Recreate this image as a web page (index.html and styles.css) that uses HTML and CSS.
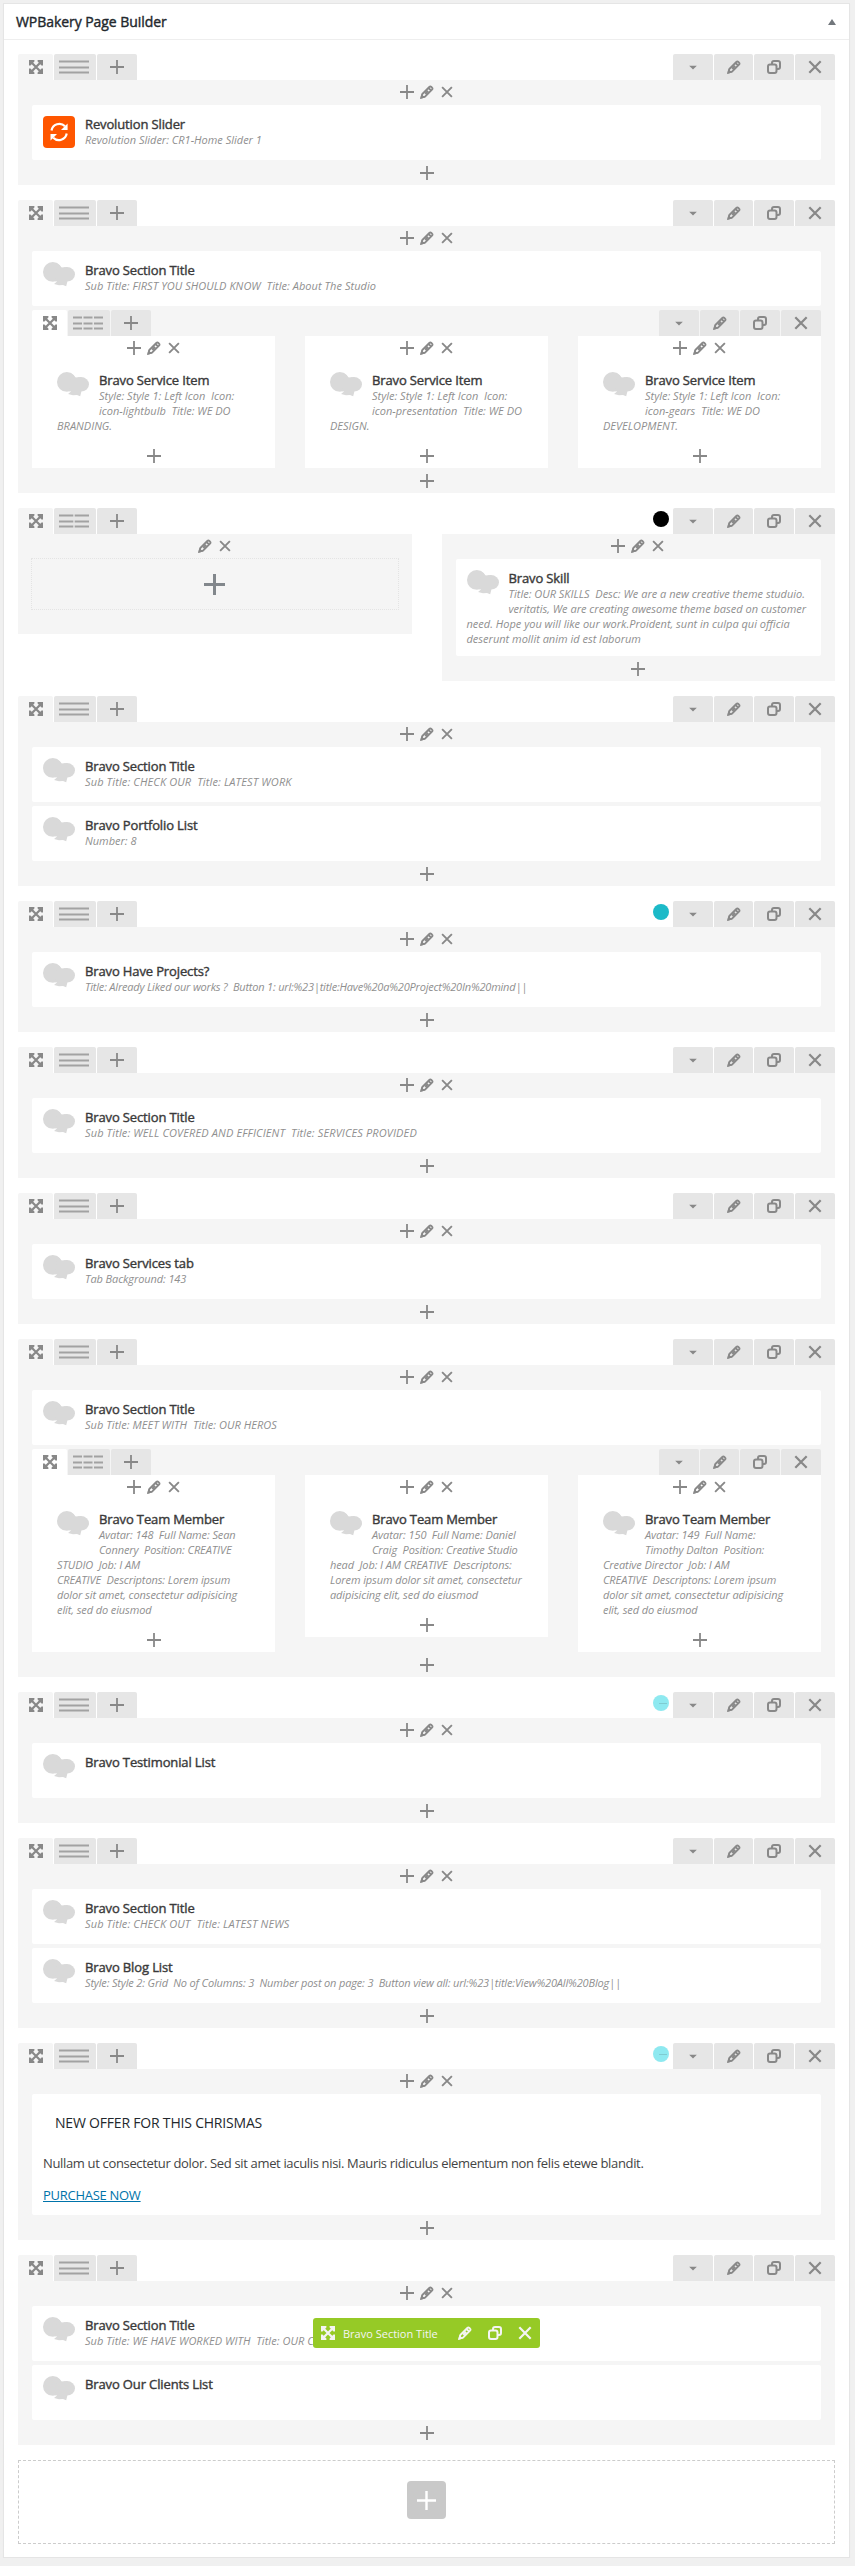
FILE: index.html
```html
<!DOCTYPE html>
<html lang="en">
<head>
<meta charset="utf-8">
<title>WPBakery Page Builder</title>
<link rel="stylesheet" href="styles.css">
</head>
<body>
<svg class="sprite" aria-hidden="true">
  <symbol id="move" viewBox="0 0 14 14"><path d="M3 3l8 8M11 3l-8 8" stroke="currentColor" stroke-width="2.200" fill="none"/><path d="M0 0h5.400v1.500L1.500 5.400H0zM14 0v5.400h-1.500L8.600 1.500V0zM0 14V8.600h1.500l3.900 3.900V14zM14 14H8.600v-1.500l3.900-3.900H14z" fill="currentColor"/></symbol>
  <symbol id="plus" viewBox="0 0 14 14"><path d="M6.100 0h1.800v6.100H14v1.800H7.900V14H6.100V7.900H0V6.100h6.100z" fill="currentColor"/></symbol>
  <symbol id="pencil" viewBox="0 0 14 14"><path d="M1.500 12.500l.8-3.500 7-7a1.500 1.500 0 0 1 2.100 0l.6.600a1.500 1.500 0 0 1 0 2.100l-7 7zM8.500 3l2.500 2.500M5.200 8.800l2.900-2.900" fill="none" stroke="currentColor" stroke-width="1.800"/><path d="M0 14l1.400-5 3.600 3.600z" fill="currentColor"/></symbol>
  <symbol id="close" viewBox="0 0 14 14"><path d="M1.300 1.300l11.400 11.400M12.700 1.300L1.300 12.700" stroke="currentColor" stroke-width="2.200" fill="none"/></symbol>
  <symbol id="copy" viewBox="0 0 14 14"><rect x="1" y="4.500" width="8.500" height="8.500" rx="2" fill="none" stroke="currentColor" stroke-width="2"/><path d="M5 4.500V3a2 2 0 0 1 2-2h4a2 2 0 0 1 2 2v4a2 2 0 0 1-2 2H9.500" fill="none" stroke="currentColor" stroke-width="2"/></symbol>
  <symbol id="caret" viewBox="0 0 14 14"><path d="M3.200 5.800h7.600L7 9.600z" fill="currentColor"/></symbol>
  <symbol id="lay1" viewBox="0 0 30 14"><path d="M0 1.500h30M0 7.500h30M0 12.500h30" stroke="currentColor" stroke-width="2"/></symbol>
  <symbol id="lay2" viewBox="0 0 30 14"><path d="M0 1.500h30M0 7.500h30M0 12.500h30" stroke="currentColor" stroke-width="2" stroke-dasharray="14.300 1.400"/></symbol>
  <symbol id="lay3" viewBox="0 0 30 14"><path d="M0 1.500h30M0 7.500h30M0 12.500h30" stroke="currentColor" stroke-width="2" stroke-dasharray="9 1.500"/></symbol>
  <symbol id="cloud" viewBox="0 0 32 32"><g fill="#d9d9d9"><ellipse cx="9.800" cy="9.900" rx="9.800" ry="9.900"/><ellipse cx="24" cy="12.300" rx="8" ry="7.300"/><path d="M14 1.300L18.500 5.500 24 5V19.500L12 19.200z"/><path d="M12 17H25L23.200 24.200 20 23 16 23.300 11 22 14 19.500z"/></g></symbol>
  <symbol id="revo" viewBox="0 0 32 32"><rect width="32" height="32" rx="4" fill="#ff5600"/><path d="M8.500 14.500A8 8 0 0 1 22 10.200M23.700 17.500A8 8 0 0 1 10.200 21.800" fill="none" stroke="#fff" stroke-width="2.200"/><path d="M24.600 7.500V14H18zM7.500 24.500V18H14z" fill="#fff"/></symbol>
</svg>

<main class="panel">
  <header class="panel-head"><h2>WPBakery Page Builder</h2><span class="toggle"></span></header>
  <div class="rows">

    <section class="row">
      <div class="bar"><b class="tab grip"><svg><use href="#move"/></svg></b><b class="tab lay"><svg><use href="#lay1"/></svg></b><b class="tab"><svg><use href="#plus"/></svg></b><i class="fill"></i><b class="tab"><svg><use href="#caret"/></svg></b><b class="tab edit"><svg><use href="#pencil"/></svg></b><b class="tab"><svg><use href="#copy"/></svg></b><b class="tab"><svg><use href="#close"/></svg></b></div>
      <div class="col">
        <div class="ctl"><svg><use href="#plus"/></svg><svg><use href="#pencil"/></svg><svg class="x"><use href="#close"/></svg></div>
        <div class="card"><svg class="ico"><use href="#revo"/></svg><h4>Revolution Slider</h4><p>Revolution Slider: CR1-Home Slider 1</p></div>
        <div class="ctl end"><svg><use href="#plus"/></svg></div>
      </div>
    </section>

    <section class="row">
      <div class="bar"><b class="tab grip"><svg><use href="#move"/></svg></b><b class="tab lay"><svg><use href="#lay1"/></svg></b><b class="tab"><svg><use href="#plus"/></svg></b><i class="fill"></i><b class="tab"><svg><use href="#caret"/></svg></b><b class="tab edit"><svg><use href="#pencil"/></svg></b><b class="tab"><svg><use href="#copy"/></svg></b><b class="tab"><svg><use href="#close"/></svg></b></div>
      <div class="col">
        <div class="ctl"><svg><use href="#plus"/></svg><svg><use href="#pencil"/></svg><svg class="x"><use href="#close"/></svg></div>
        <div class="card"><svg class="ico"><use href="#cloud"/></svg><h4>Bravo Section Title</h4><p class="wide">Sub Title: FIRST YOU SHOULD KNOW&nbsp; Title: About The Studio</p></div>
        <div class="inner">
          <div class="bar"><b class="tab grip"><svg><use href="#move"/></svg></b><b class="tab lay"><svg><use href="#lay3"/></svg></b><b class="tab"><svg><use href="#plus"/></svg></b><i class="fill"></i><b class="tab"><svg><use href="#caret"/></svg></b><b class="tab edit"><svg><use href="#pencil"/></svg></b><b class="tab"><svg><use href="#copy"/></svg></b><b class="tab"><svg><use href="#close"/></svg></b></div>
          <div class="cols">
            <div class="col">
              <div class="ctl"><svg><use href="#plus"/></svg><svg><use href="#pencil"/></svg><svg class="x"><use href="#close"/></svg></div>
              <div class="card"><svg class="ico"><use href="#cloud"/></svg><h4>Bravo Service Item</h4><p>Style: Style 1: Left Icon&nbsp; Icon:<br>icon-lightbulb&nbsp; Title: WE DO<br>BRANDING.</p></div>
              <div class="ctl end"><svg><use href="#plus"/></svg></div>
            </div>
            <div class="col">
              <div class="ctl"><svg><use href="#plus"/></svg><svg><use href="#pencil"/></svg><svg class="x"><use href="#close"/></svg></div>
              <div class="card"><svg class="ico"><use href="#cloud"/></svg><h4>Bravo Service Item</h4><p>Style: Style 1: Left Icon&nbsp; Icon:<br>icon-presentation&nbsp; Title: WE DO<br>DESIGN.</p></div>
              <div class="ctl end"><svg><use href="#plus"/></svg></div>
            </div>
            <div class="col">
              <div class="ctl"><svg><use href="#plus"/></svg><svg><use href="#pencil"/></svg><svg class="x"><use href="#close"/></svg></div>
              <div class="card"><svg class="ico"><use href="#cloud"/></svg><h4>Bravo Service Item</h4><p>Style: Style 1: Left Icon&nbsp; Icon:<br>icon-gears&nbsp; Title: WE DO<br>DEVELOPMENT.</p></div>
              <div class="ctl end"><svg><use href="#plus"/></svg></div>
            </div>
          </div>
        </div>
        <div class="ctl end"><svg><use href="#plus"/></svg></div>
      </div>
    </section>

    <section class="row">
      <div class="bar"><b class="tab grip"><svg><use href="#move"/></svg></b><b class="tab lay"><svg><use href="#lay2"/></svg></b><b class="tab"><svg><use href="#plus"/></svg></b><i class="fill"></i><i class="dot black"></i><b class="tab"><svg><use href="#caret"/></svg></b><b class="tab edit"><svg><use href="#pencil"/></svg></b><b class="tab"><svg><use href="#copy"/></svg></b><b class="tab"><svg><use href="#close"/></svg></b></div>
      <div class="cols">
        <div class="col empty">
          <div class="ctl"><svg><use href="#pencil"/></svg><svg class="x"><use href="#close"/></svg></div>
          <div class="blank"><i class="bigplus"></i></div>
        </div>
        <div class="col">
          <div class="ctl"><svg><use href="#plus"/></svg><svg><use href="#pencil"/></svg><svg class="x"><use href="#close"/></svg></div>
          <div class="card"><svg class="ico"><use href="#cloud"/></svg><h4>Bravo Skill</h4><p>Title: OUR SKILLS&nbsp; Desc: We are a new creative theme studuio.<br>veritatis, We are creating awesome theme based on customer<br>need. Hope you will like our work.Proident, sunt in culpa qui officia<br>deserunt mollit anim id est laborum</p></div>
          <div class="ctl end"><svg><use href="#plus"/></svg></div>
        </div>
      </div>
    </section>

    <section class="row">
      <div class="bar"><b class="tab grip"><svg><use href="#move"/></svg></b><b class="tab lay"><svg><use href="#lay1"/></svg></b><b class="tab"><svg><use href="#plus"/></svg></b><i class="fill"></i><b class="tab"><svg><use href="#caret"/></svg></b><b class="tab edit"><svg><use href="#pencil"/></svg></b><b class="tab"><svg><use href="#copy"/></svg></b><b class="tab"><svg><use href="#close"/></svg></b></div>
      <div class="col">
        <div class="ctl"><svg><use href="#plus"/></svg><svg><use href="#pencil"/></svg><svg class="x"><use href="#close"/></svg></div>
        <div class="card"><svg class="ico"><use href="#cloud"/></svg><h4>Bravo Section Title</h4><p class="caps">Sub Title: CHECK OUR&nbsp; Title: LATEST WORK</p></div>
        <div class="card"><svg class="ico"><use href="#cloud"/></svg><h4>Bravo Portfolio List</h4><p>Number: 8</p></div>
        <div class="ctl end"><svg><use href="#plus"/></svg></div>
      </div>
    </section>

    <section class="row">
      <div class="bar"><b class="tab grip"><svg><use href="#move"/></svg></b><b class="tab lay"><svg><use href="#lay1"/></svg></b><b class="tab"><svg><use href="#plus"/></svg></b><i class="fill"></i><i class="dot teal"></i><b class="tab"><svg><use href="#caret"/></svg></b><b class="tab edit"><svg><use href="#pencil"/></svg></b><b class="tab"><svg><use href="#copy"/></svg></b><b class="tab"><svg><use href="#close"/></svg></b></div>
      <div class="col">
        <div class="ctl"><svg><use href="#plus"/></svg><svg><use href="#pencil"/></svg><svg class="x"><use href="#close"/></svg></div>
        <div class="card"><svg class="ico"><use href="#cloud"/></svg><h4>Bravo Have Projects?</h4><p class="url">Title: Already Liked our works ?&nbsp; Button 1: url:%23|title:Have%20a%20Project%20In%20mind||</p></div>
        <div class="ctl end"><svg><use href="#plus"/></svg></div>
      </div>
    </section>

    <section class="row">
      <div class="bar"><b class="tab grip"><svg><use href="#move"/></svg></b><b class="tab lay"><svg><use href="#lay1"/></svg></b><b class="tab"><svg><use href="#plus"/></svg></b><i class="fill"></i><b class="tab"><svg><use href="#caret"/></svg></b><b class="tab edit"><svg><use href="#pencil"/></svg></b><b class="tab"><svg><use href="#copy"/></svg></b><b class="tab"><svg><use href="#close"/></svg></b></div>
      <div class="col">
        <div class="ctl"><svg><use href="#plus"/></svg><svg><use href="#pencil"/></svg><svg class="x"><use href="#close"/></svg></div>
        <div class="card"><svg class="ico"><use href="#cloud"/></svg><h4>Bravo Section Title</h4><p class="caps">Sub Title: WELL COVERED AND EFFICIENT&nbsp; Title: SERVICES PROVIDED</p></div>
        <div class="ctl end"><svg><use href="#plus"/></svg></div>
      </div>
    </section>

    <section class="row">
      <div class="bar"><b class="tab grip"><svg><use href="#move"/></svg></b><b class="tab lay"><svg><use href="#lay1"/></svg></b><b class="tab"><svg><use href="#plus"/></svg></b><i class="fill"></i><b class="tab"><svg><use href="#caret"/></svg></b><b class="tab edit"><svg><use href="#pencil"/></svg></b><b class="tab"><svg><use href="#copy"/></svg></b><b class="tab"><svg><use href="#close"/></svg></b></div>
      <div class="col">
        <div class="ctl"><svg><use href="#plus"/></svg><svg><use href="#pencil"/></svg><svg class="x"><use href="#close"/></svg></div>
        <div class="card"><svg class="ico"><use href="#cloud"/></svg><h4>Bravo Services tab</h4><p class="snug">Tab Background: 143</p></div>
        <div class="ctl end"><svg><use href="#plus"/></svg></div>
      </div>
    </section>

    <section class="row">
      <div class="bar"><b class="tab grip"><svg><use href="#move"/></svg></b><b class="tab lay"><svg><use href="#lay1"/></svg></b><b class="tab"><svg><use href="#plus"/></svg></b><i class="fill"></i><b class="tab"><svg><use href="#caret"/></svg></b><b class="tab edit"><svg><use href="#pencil"/></svg></b><b class="tab"><svg><use href="#copy"/></svg></b><b class="tab"><svg><use href="#close"/></svg></b></div>
      <div class="col">
        <div class="ctl"><svg><use href="#plus"/></svg><svg><use href="#pencil"/></svg><svg class="x"><use href="#close"/></svg></div>
        <div class="card"><svg class="ico"><use href="#cloud"/></svg><h4>Bravo Section Title</h4><p class="wide">Sub Title: MEET WITH&nbsp; Title: OUR HEROS</p></div>
        <div class="inner">
          <div class="bar"><b class="tab grip"><svg><use href="#move"/></svg></b><b class="tab lay"><svg><use href="#lay3"/></svg></b><b class="tab"><svg><use href="#plus"/></svg></b><i class="fill"></i><b class="tab"><svg><use href="#caret"/></svg></b><b class="tab edit"><svg><use href="#pencil"/></svg></b><b class="tab"><svg><use href="#copy"/></svg></b><b class="tab"><svg><use href="#close"/></svg></b></div>
          <div class="cols">
            <div class="col">
              <div class="ctl"><svg><use href="#plus"/></svg><svg><use href="#pencil"/></svg><svg class="x"><use href="#close"/></svg></div>
              <div class="card"><svg class="ico"><use href="#cloud"/></svg><h4>Bravo Team Member</h4><p class="snug">Avatar: 148&nbsp; Full Name: Sean<br>Connery&nbsp; Position: CREATIVE<br>STUDIO&nbsp; Job: I AM<br>CREATIVE&nbsp; Descriptons: Lorem ipsum<br>dolor sit amet, consectetur adipisicing<br>elit, sed do eiusmod</p></div>
              <div class="ctl end"><svg><use href="#plus"/></svg></div>
            </div>
            <div class="col">
              <div class="ctl"><svg><use href="#plus"/></svg><svg><use href="#pencil"/></svg><svg class="x"><use href="#close"/></svg></div>
              <div class="card"><svg class="ico"><use href="#cloud"/></svg><h4>Bravo Team Member</h4><p class="snug">Avatar: 150&nbsp; Full Name: Daniel<br>Craig&nbsp; Position: Creative Studio<br>head&nbsp; Job: I AM CREATIVE&nbsp; Descriptons:<br>Lorem ipsum dolor sit amet, consectetur<br>adipisicing elit, sed do eiusmod</p></div>
              <div class="ctl end"><svg><use href="#plus"/></svg></div>
            </div>
            <div class="col">
              <div class="ctl"><svg><use href="#plus"/></svg><svg><use href="#pencil"/></svg><svg class="x"><use href="#close"/></svg></div>
              <div class="card"><svg class="ico"><use href="#cloud"/></svg><h4>Bravo Team Member</h4><p class="snug">Avatar: 149&nbsp; Full Name:<br>Timothy Dalton&nbsp; Position:<br>Creative Director&nbsp; Job: I AM<br>CREATIVE&nbsp; Descriptons: Lorem ipsum<br>dolor sit amet, consectetur adipisicing<br>elit, sed do eiusmod</p></div>
              <div class="ctl end"><svg><use href="#plus"/></svg></div>
            </div>
          </div>
        </div>
        <div class="ctl end"><svg><use href="#plus"/></svg></div>
      </div>
    </section>

    <section class="row">
      <div class="bar"><b class="tab grip"><svg><use href="#move"/></svg></b><b class="tab lay"><svg><use href="#lay1"/></svg></b><b class="tab"><svg><use href="#plus"/></svg></b><i class="fill"></i><i class="dot aqua"></i><b class="tab"><svg><use href="#caret"/></svg></b><b class="tab edit"><svg><use href="#pencil"/></svg></b><b class="tab"><svg><use href="#copy"/></svg></b><b class="tab"><svg><use href="#close"/></svg></b></div>
      <div class="col">
        <div class="ctl"><svg><use href="#plus"/></svg><svg><use href="#pencil"/></svg><svg class="x"><use href="#close"/></svg></div>
        <div class="card"><svg class="ico"><use href="#cloud"/></svg><h4>Bravo Testimonial List</h4></div>
        <div class="ctl end"><svg><use href="#plus"/></svg></div>
      </div>
    </section>

    <section class="row">
      <div class="bar"><b class="tab grip"><svg><use href="#move"/></svg></b><b class="tab lay"><svg><use href="#lay1"/></svg></b><b class="tab"><svg><use href="#plus"/></svg></b><i class="fill"></i><b class="tab"><svg><use href="#caret"/></svg></b><b class="tab edit"><svg><use href="#pencil"/></svg></b><b class="tab"><svg><use href="#copy"/></svg></b><b class="tab"><svg><use href="#close"/></svg></b></div>
      <div class="col">
        <div class="ctl"><svg><use href="#plus"/></svg><svg><use href="#pencil"/></svg><svg class="x"><use href="#close"/></svg></div>
        <div class="card"><svg class="ico"><use href="#cloud"/></svg><h4>Bravo Section Title</h4><p class="caps">Sub Title: CHECK OUT&nbsp; Title: LATEST NEWS</p></div>
        <div class="card"><svg class="ico"><use href="#cloud"/></svg><h4>Bravo Blog List</h4><p class="url long">Style: Style 2: Grid&nbsp; No of Columns: 3&nbsp; Number post on page: 3&nbsp; Button view all: url:%23|title:View%20All%20Blog||</p></div>
        <div class="ctl end"><svg><use href="#plus"/></svg></div>
      </div>
    </section>

    <section class="row">
      <div class="bar"><b class="tab grip"><svg><use href="#move"/></svg></b><b class="tab lay"><svg><use href="#lay1"/></svg></b><b class="tab"><svg><use href="#plus"/></svg></b><i class="fill"></i><i class="dot aqua"></i><b class="tab"><svg><use href="#caret"/></svg></b><b class="tab edit"><svg><use href="#pencil"/></svg></b><b class="tab"><svg><use href="#copy"/></svg></b><b class="tab"><svg><use href="#close"/></svg></b></div>
      <div class="col">
        <div class="ctl"><svg><use href="#plus"/></svg><svg><use href="#pencil"/></svg><svg class="x"><use href="#close"/></svg></div>
        <div class="card offer"><h3>NEW OFFER FOR THIS CHRISMAS</h3><div class="copy">Nullam ut consectetur dolor. Sed sit amet iaculis nisi. Mauris ridiculus elementum non felis etewe blandit.</div><a href="#">PURCHASE NOW</a></div>
        <div class="ctl end"><svg><use href="#plus"/></svg></div>
      </div>
    </section>

    <section class="row">
      <div class="bar"><b class="tab grip"><svg><use href="#move"/></svg></b><b class="tab lay"><svg><use href="#lay1"/></svg></b><b class="tab"><svg><use href="#plus"/></svg></b><i class="fill"></i><b class="tab"><svg><use href="#caret"/></svg></b><b class="tab edit"><svg><use href="#pencil"/></svg></b><b class="tab"><svg><use href="#copy"/></svg></b><b class="tab"><svg><use href="#close"/></svg></b></div>
      <div class="col">
        <div class="ctl"><svg><use href="#plus"/></svg><svg><use href="#pencil"/></svg><svg class="x"><use href="#close"/></svg></div>
        <div class="card"><svg class="ico"><use href="#cloud"/></svg><h4>Bravo Section Title</h4><p class="wide">Sub Title: WE HAVE WORKED WITH&nbsp; Title: OUR C</p>
          <div class="hover"><svg><use href="#move"/></svg><span>Bravo Section Title</span><svg><use href="#pencil"/></svg><svg><use href="#copy"/></svg><svg><use href="#close"/></svg></div>
        </div>
        <div class="card"><svg class="ico"><use href="#cloud"/></svg><h4>Bravo Our Clients List</h4></div>
        <div class="ctl end"><svg><use href="#plus"/></svg></div>
      </div>
    </section>

    <div class="add"><span class="addbtn"><svg><use href="#plus"/></svg></span></div>
  </div>
</main>
</body>
</html>
```
FILE: styles.css
```css
* { box-sizing: border-box; }
body { margin: 0; padding: 3px 5px 0 3px; background: #f0f0f0; font-family: "Open Sans", "Noto Sans", sans-serif; color: #444; }
.sprite { display: none; }
h2, h3, h4, p { margin: 0; font-weight: 400; }
svg { display: block; width: 14px; height: 14px; flex: none; }

.panel { height: 2555px; background: #fff; border: 1px solid #e5e5e5; box-shadow: 0 1px 1px rgba(0, 0, 0, .04); }
.panel-head { display: flex; align-items: center; justify-content: space-between; height: 36px; padding: 0 13px 0 12px; border-bottom: 1px solid #eee; }
.panel-head h2 { font-size: 14px; letter-spacing: -.06px; color: #23282d; -webkit-text-stroke: .4px #23282d; }
.toggle { width: 0; height: 0; border: 4px solid transparent; border-top: 0; border-bottom: 6px solid #72777c; }
.rows { display: flex; flex-direction: column; gap: 15px; padding: 14px 14px 0; }

.bar { display: flex; gap: 1px; height: 26px; color: #888; }
.tab { display: flex; align-items: center; justify-content: center; width: 40px; background: #e6e6e6; border-radius: 2px 2px 0 0; }
.tab.grip { width: 35px; background: #f5f5f5; }
.tab.lay { width: 42px; padding-right: 2px; color: #a2a2a2; }
.tab.lay svg { width: 30px; }
.tab.edit { width: 39px; }
.fill { flex: 1; }
.dot { width: 16px; height: 16px; margin: 3px 3px 0 0; border-radius: 50%; }
.black { background: #000; }
.teal { background: #1cbac8; }
.aqua { background: linear-gradient(#7fcbd1, #7fcbd1) 6px 8px / 8px 1px no-repeat #8ee9f0; }

.col { background: #f5f5f5; padding: 0 14px; }
.cols { display: flex; align-items: flex-start; gap: 30px; }
.cols .col { flex: 1; min-width: 0; }
.ctl { display: flex; align-items: center; justify-content: center; gap: 6px; height: 25px; padding-bottom: 1px; color: #888; }
.ctl.end { padding: 1px 0 0; }
.ctl .x { padding: 1px; }
.card { position: relative; min-height: 55px; padding: 11px; background: #fff; border-radius: 2px; }
.card + .card, .inner { margin-top: 4px; }
.ico { float: left; width: 32px; height: 32px; margin: 0 10px 3px 0; }
.card h4 { padding-top: 1px; font-size: 13px; line-height: 15px; letter-spacing: -.13px; color: #3a3a3a; -webkit-text-stroke: .4px #3a3a3a; white-space: nowrap; }
.card p { margin-bottom: -1px; font-size: 11px; line-height: 15px; font-style: italic; color: #8f8f8f; white-space: nowrap; }
.card .wide { letter-spacing: .05px; }
.card .caps { letter-spacing: .13px; }
.card .snug { letter-spacing: -.1px; }
.card .url { letter-spacing: -.2px; }
.card .url.long { letter-spacing: -.16px; }
.inner .col, .inner .grip { background: #fff; }

.empty { height: 100px; }
.blank { display: flex; align-items: center; justify-content: center; height: 52px; margin: -1px -1px 0; border: 1px dotted #e4e4e4; }
.bigplus { width: 21px; height: 21px; background: linear-gradient(#82878c, #82878c) center / 21px 3px no-repeat, linear-gradient(#82878c, #82878c) center / 3px 21px no-repeat; }

.offer { height: 121px; font-size: 13px; }
.offer h3 { padding: 8px 12px 0; font-size: 14px; line-height: 20px; letter-spacing: -.2px; color: #23282d; }
.offer .copy { margin-top: 20px; line-height: 20px; letter-spacing: -.34px; white-space: nowrap; }
.offer a { display: block; margin-top: 12px; line-height: 20px; letter-spacing: -.28px; color: #0073aa; }

.hover { position: absolute; left: 281px; top: 12px; display: flex; align-items: center; width: 227px; height: 30px; padding-left: 8px; background: #96ca26; border-radius: 3px; color: #f4f4f4; font-size: 11px; white-space: nowrap; }
.hover span { width: 123px; padding-left: 8px; }
.hover svg + svg { margin-left: 16px; }

.add { display: flex; align-items: center; justify-content: center; height: 84px; padding-bottom: 4px; border: 1px dashed #ccc; }
.addbtn { display: flex; align-items: center; justify-content: center; width: 39px; height: 38px; background: #c9c9c9; border-radius: 4px; color: #fff; }
.addbtn svg { width: 19px; height: 19px; }
```
